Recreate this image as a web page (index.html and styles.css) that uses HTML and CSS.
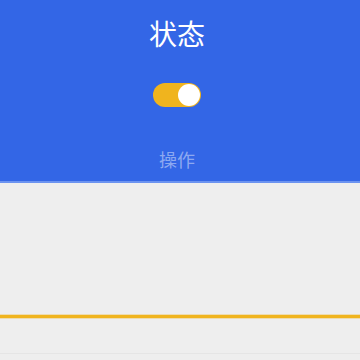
FILE: index.html
```html
<!DOCTYPE html>
<html lang="zh">
<head>
    <meta charset="UTF-8">
    <meta name="viewport" content="width=device-width, initial-scale=1.0">
    <title>状态</title>
    <link rel="stylesheet" href="styles.css">
</head>
<body>

    <div class="header">
        <h1 class="title">状态</h1>
        <div class="switch on">
            <div class="knob"></div>
        </div>
        <div class="action">操作</div>
    </div>

    <div class="content">
        <div class="progress"></div>
        <div class="footer-line"></div>
    </div>

</body>
</html>
```

FILE: styles.css
```css
body {
    margin: 0;
    background: #eeeeee;
    font-family: "Noto Sans CJK SC", "Noto Sans", sans-serif;
    overflow: hidden;
}

.header {
    background: #3366e6;
    height: 181px;
    padding-right: 6px;
    border-bottom: 2px solid #6b93f0;
    display: flex;
    flex-direction: column;
    align-items: center;
}

.title {
    margin: 0;
    margin-top: 14px;
    font-size: 28px;
    font-weight: normal;
    line-height: 38px;
    color: #ffffff;
}

.switch {
    margin-top: 31px;
    width: 48px;
    height: 24px;
    border-radius: 12px;
    background: #f0b41e;
    position: relative;
}

.knob {
    position: absolute;
    top: 1px;
    right: 1px;
    width: 22px;
    height: 22px;
    border-radius: 50%;
    background: #ffffff;
}

.action {
    margin-top: 40px;
    font-size: 18px;
    line-height: 24px;
    color: rgba(255, 255, 255, 0.45);
}

.content {
    height: 177px;
    display: flex;
    flex-direction: column;
}

.progress {
    margin-top: 132px;
    height: 3px;
    background: #f0b41e;
    box-shadow: 0 0 0 1px rgba(240, 180, 30, 0.3);
}

.footer-line {
    margin-top: 35px;
    height: 1px;
    background: #e5e5e5;
}
```
